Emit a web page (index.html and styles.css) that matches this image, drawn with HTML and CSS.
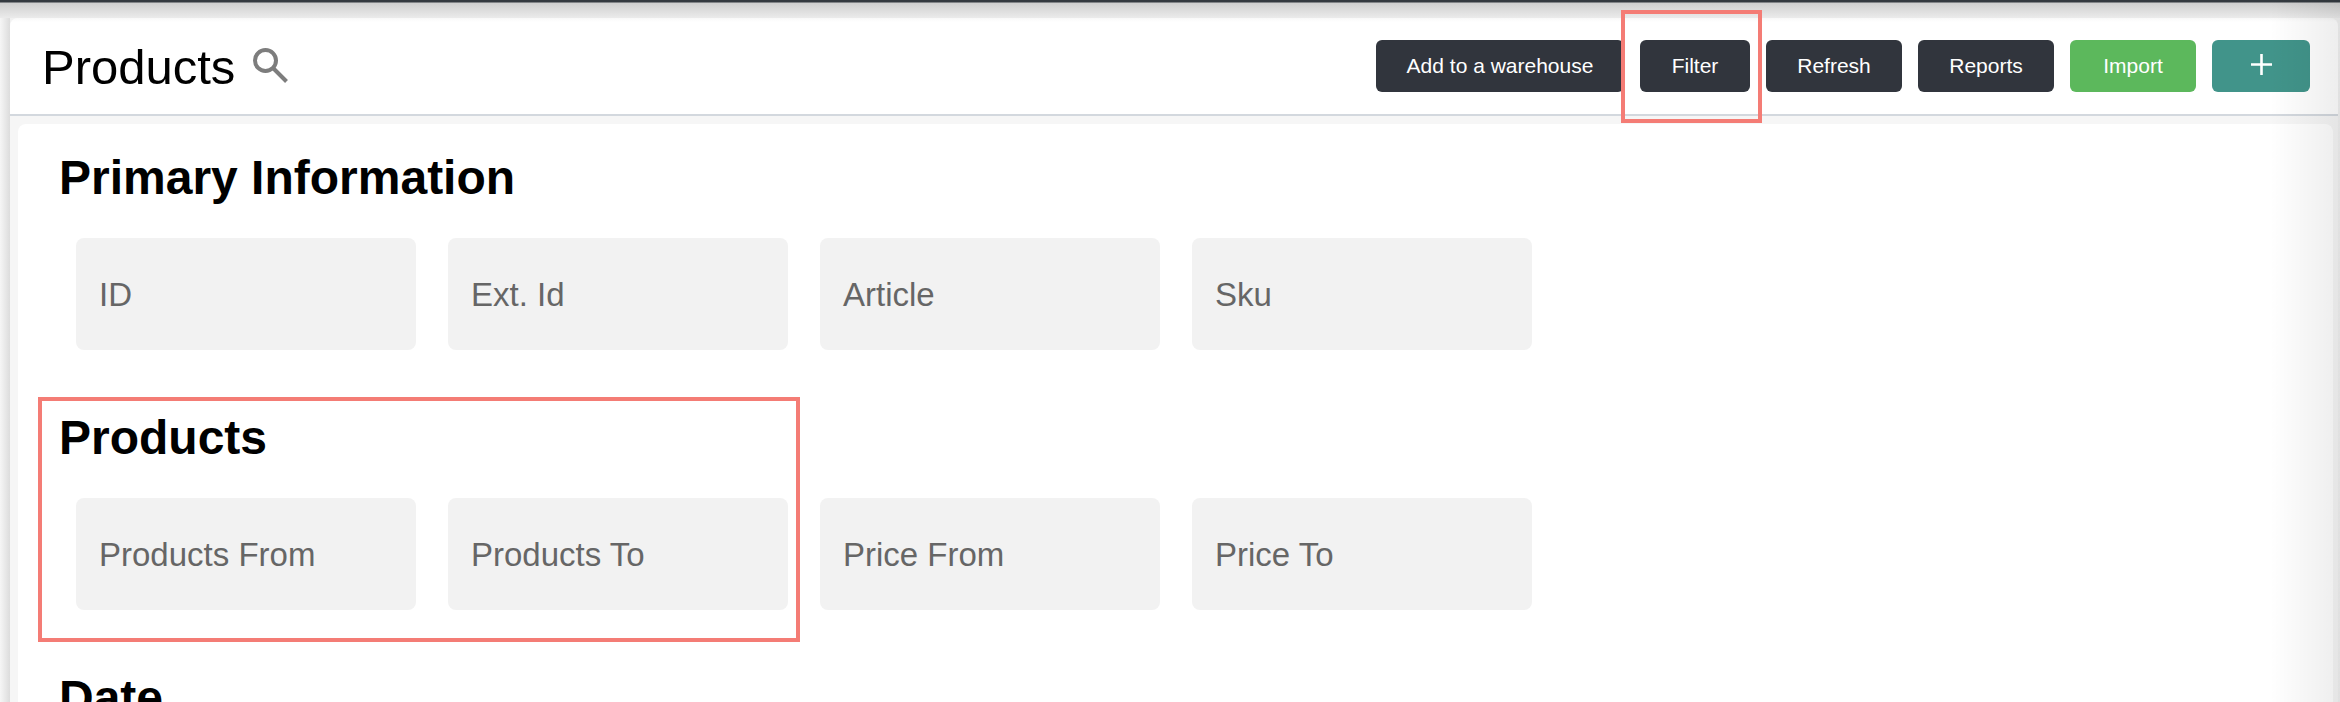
FILE: index.html
```html
<!DOCTYPE html>
<html lang="en">
<head>
<meta charset="utf-8">
<title>Products</title>
<link rel="stylesheet" href="styles.css">
</head>
<body>
<div class="topbar"></div>
<div class="card">
  <header class="header">
    <div class="title-wrap">
      <h1 class="title">Products</h1>
      <svg class="search" viewBox="0 0 35 35" width="35" height="35" fill="none" stroke="#7d7d7d" aria-hidden="true">
        <circle cx="12.5" cy="12.5" r="10.5" stroke-width="4"/>
        <path d="M20.5 20.5 L33.5 33.5" stroke-width="4"/>
      </svg>
    </div>
    <div class="actions">
      <button class="btn dark add">Add to a warehouse</button>
      <button class="btn dark filter">Filter</button>
      <button class="btn dark refresh">Refresh</button>
      <button class="btn dark reports">Reports</button>
      <button class="btn green import">Import</button>
      <button class="btn teal plus">
        <svg class="plus-icon" viewBox="0 0 21 21" width="21" height="21" stroke="#fff" stroke-width="2.6" aria-hidden="true"><path d="M10.5 0V21M0 10.5H21"/></svg>
      </button>
    </div>
  </header>
  <main class="panel">
    <section class="section">
      <h2 class="heading">Primary Information</h2>
      <div class="fields">
        <div class="field">ID</div>
        <div class="field">Ext. Id</div>
        <div class="field">Article</div>
        <div class="field">Sku</div>
      </div>
    </section>
    <section class="section">
      <h2 class="heading">Products</h2>
      <div class="fields">
        <div class="field">Products From</div>
        <div class="field">Products To</div>
        <div class="field">Price From</div>
        <div class="field">Price To</div>
      </div>
    </section>
    <section class="section">
      <h2 class="heading">Date</h2>
    </section>
  </main>
</div>
<div class="scrim-left"></div>
<div class="scrim-right"></div>
<div class="mark mark-filter"></div>
<div class="mark mark-products"></div>
</body>
</html>
```
FILE: styles.css
```css
* { box-sizing: border-box; }
html, body { margin: 0; height: 702px; overflow: hidden; }
body {
  background: #f1f1f1;
  font-family: "Liberation Sans", Arial, sans-serif;
  position: relative;
  padding-left: 10px;
  padding-right: 2px;
}
.topbar {
  position: absolute;
  top: 0; left: 0; right: 0;
  height: 18px;
  background: linear-gradient(#343a40 0, #343a40 2px, #cfcfcf 3px, #ebebeb 18px);
}
.card {
  position: relative;
  margin-top: 18px;
  height: 684px;
  background: #f6f6f6;
  border-radius: 8px 8px 0 0;
  overflow: hidden;
}
.header {
  height: 98px;
  background: linear-gradient(#f8f8f8 0, #fff 4px);
  border-bottom: 2px solid #d3d8de;
  display: flex;
  align-items: flex-start;
  justify-content: space-between;
  padding: 22px 28px 0 32px;
}
.title-wrap { display: flex; align-items: flex-start; }
.title {
  margin: 1px 0 0;
  font-size: 49px;
  font-weight: 400;
  line-height: 52px;
  color: #000;
}
.search { margin: 8px 0 0 18px; }
.actions { display: flex; gap: 16px; }
.btn {
  height: 52px;
  border: 0;
  padding: 0;
  border-radius: 6px;
  color: #fff;
  font-family: inherit;
  font-size: 21px;
  display: flex;
  align-items: center;
  justify-content: center;
}
.dark { background: #31353d; }
.green { background: #5cb85c; }
.teal { background: #41948a; }
.add { width: 248px; }
.filter { width: 110px; }
.refresh { width: 136px; }
.reports { width: 136px; }
.import { width: 126px; }
.plus { width: 98px; }
.plus-icon { margin-top: -3px; }
.panel {
  margin: 8px 5px 0 8px;
  height: 600px;
  background: #fff;
  border-radius: 8px;
  padding: 27px 0 0 41px;
}
.section { margin-bottom: 61px; }
.heading {
  margin: 0 0 33px;
  font-size: 48px;
  font-weight: 700;
  line-height: 54px;
  color: #000;
}
.fields { display: flex; gap: 32px; padding-left: 17px; }
.field {
  width: 340px;
  height: 112px;
  background: #f2f2f2;
  border-radius: 8px;
  color: #666;
  font-size: 33px;
  padding: 1px 23px 0;
  display: flex;
  align-items: center;
}
.scrim-left {
  position: absolute;
  top: 18px; bottom: 0; left: 0;
  width: 10px;
  background: linear-gradient(to right, #f6f6f6, #dcdcdc);
}
.scrim-right {
  position: absolute;
  top: 0; bottom: 0; right: 0;
  width: 70px;
  background: linear-gradient(to right, rgba(0,0,0,0), rgba(0,0,0,.07));
  pointer-events: none;
}
.mark {
  position: absolute;
  border: 4px solid #f47c75;
  pointer-events: none;
}
.mark-filter { left: 1621px; top: 10px; width: 141px; height: 113px; }
.mark-products { left: 38px; top: 397px; width: 762px; height: 245px; }
```
